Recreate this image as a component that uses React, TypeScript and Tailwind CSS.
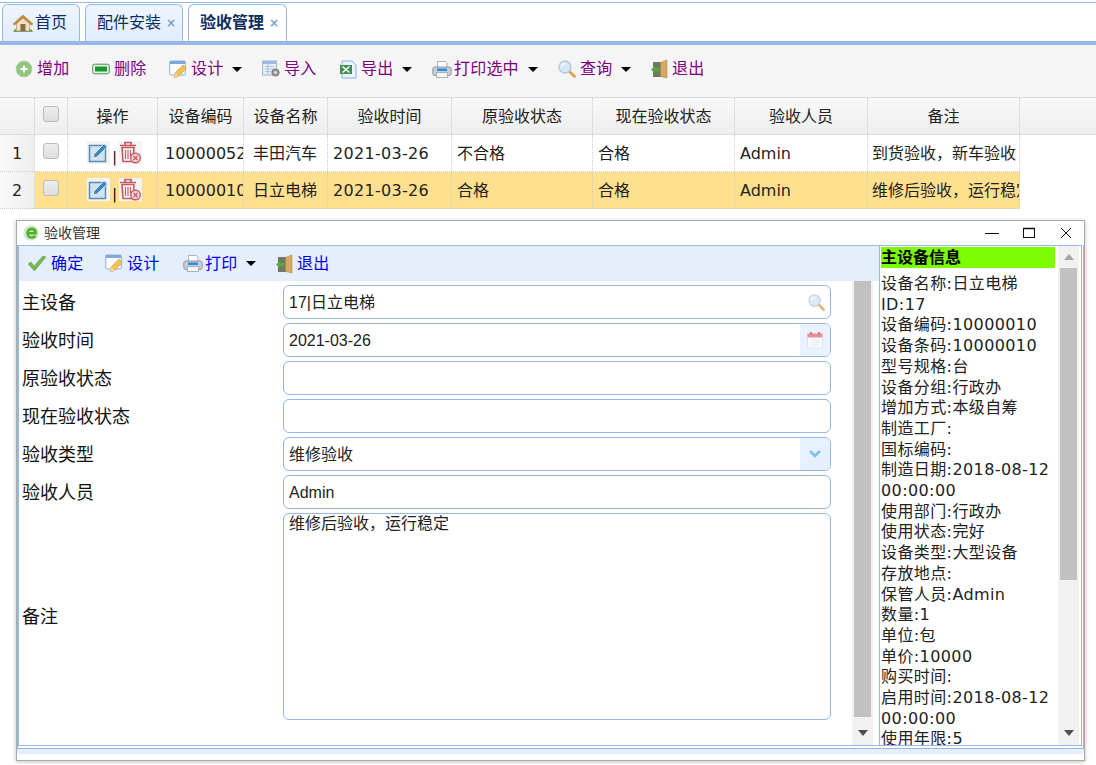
import React from 'react';

const cjk = "font-['DejaVu_Sans','Noto_Sans_CJK_SC',sans-serif]";
const arial = "font-['Liberation_Sans','Noto_Sans_CJK_SC',sans-serif]";

const HomeIcon = () => (
  <svg width="20" height="19" viewBox="0 0 20 19" className="shrink-0">
    <path d="M0 18h20l-2-3H2z" fill="#6fa34a" />
    <path d="M3.500 8v9h13V8L10 3z" fill="#efe2c4" stroke="#b69a6a" strokeWidth=".7" />
    <path d="M0 10 10 1l10 9-1.800 1L10 4l-8.200 7z" fill="#c98a3c" stroke="#a56a28" strokeWidth=".5" />
    <rect x="7.500" y="10" width="5" height="7" fill="#8a6a48" />
  </svg>
);
const PlusIcon = () => (
  <svg width="18" height="18" viewBox="0 0 18 18" className="shrink-0">
    <circle cx="9" cy="9" r="7.800" fill="#8fc77a" stroke="#a9c9a0" />
    <path d="M9 5.500v7M5.500 9h7" stroke="#fff" strokeWidth="2" />
  </svg>
);
const MinusIcon = () => (
  <svg width="18" height="12" viewBox="0 0 18 12" className="shrink-0">
    <rect x=".7" y="1.200" width="16.600" height="9.600" rx="2" fill="#e8f0e4" stroke="#4d8a56" />
    <rect x="3" y="3.500" width="12" height="5" fill="#139a2c" />
  </svg>
);
const DesignIcon = () => (
  <svg width="19" height="19" viewBox="0 0 19 19" className="shrink-0">
    <rect x=".7" y="1" width="15.600" height="14" rx="1" fill="#fdfdfd" stroke="#8fb0d8" />
    <rect x="1" y="1" width="15" height="3" fill="#7fa8dc" />
    <path d="m5 18 1-5 8-8 3.500 3.500-8 8z" fill="#f2c257" stroke="#c79436" strokeWidth=".6" />
    <path d="m5 18 1-5 3.500 3.500z" fill="#e9d9b4" />
  </svg>
);
const ImportIcon = () => (
  <svg width="19" height="18" viewBox="0 0 19 18" className="shrink-0">
    <rect x=".6" y="1" width="14" height="14" fill="#e6eefa" stroke="#9db4d6" />
    <rect x="1" y="1" width="13" height="3" fill="#9db9e0" />
    <path d="M3 6.500h9M3 9h9M3 11.500h9M6 4v10" stroke="#a9b8cc" strokeWidth=".8" />
    <circle cx="13.500" cy="12.500" r="3.600" fill="#9a9a9a" stroke="#777" />
    <circle cx="13.500" cy="12.500" r="1.300" fill="#eee" />
  </svg>
);
const ExcelIcon = () => (
  <svg width="18" height="19" viewBox="0 0 18 19" className="shrink-0">
    <path d="M3 1h10l4 4v13H3z" fill="#eaf2fb" stroke="#8fb0d8" />
    <rect x="1" y="5" width="12" height="9" fill="#3e8f52" />
    <path d="m3.500 6.500 7 6M10.500 6.500l-7 6" stroke="#fff" strokeWidth="1.600" />
  </svg>
);
const PrintIcon = () => (
  <svg width="20" height="19" viewBox="0 0 20 19" className="shrink-0">
    <path d="M5.500 8V1.500h8L15 3v5z" fill="#fff" stroke="#a9b2bd" />
    <rect x=".8" y="7" width="18.400" height="8.500" rx="2" fill="#c7ced6" stroke="#8e98a4" />
    <rect x="5" y="8.500" width="10" height="2.500" fill="#2f8be0" />
    <rect x="4.500" y="12.500" width="11" height="5" fill="#f6f6f6" stroke="#a9b2bd" />
  </svg>
);
const SearchIcon = ({ size = 18 }: { size?: number }) => (
  <svg width={size} height={size} viewBox="0 0 18 18" className="shrink-0">
    <path d="m11.500 11.500 5 5" stroke="#d9a24e" strokeWidth="2.800" strokeLinecap="round" />
    <circle cx="7" cy="7" r="6" fill="#d4e6f8" stroke="#b8c6d4" strokeWidth="1.300" />
    <path d="M3.500 6.500A3.500 3.500 0 0 1 7 3.500" stroke="#fff" strokeWidth="1.300" fill="none" />
  </svg>
);
const ExitIcon = () => (
  <svg width="19" height="20" viewBox="0 0 19 20" className="shrink-0">
    <rect x="3" y="3" width="11" height="15" fill="#6e7a62" />
    <path d="M10.500 3.500 17 1v18l-6.500-1.500z" fill="#d9a860" stroke="#ad7f3e" strokeWidth=".5" />
    <path d="M1 10.500 5 7v2h4.500v3H5v2z" fill="#54a93f" />
  </svg>
);
const CheckIcon = () => (
  <svg width="20" height="17" viewBox="0 0 20 17" className="-ml-[2px] shrink-0">
    <path d="m1 9 3-2 3 4 9-10 3 1L7.500 16z" fill="#76b852" stroke="#5d9a42" strokeWidth=".5" />
  </svg>
);
const EditIcon = () => (
  <span className="flex h-[23px] w-[23px] shrink-0 items-center justify-center bg-[#f3f3f3]">
    <svg width="21" height="21" viewBox="0 0 21 21">
      <rect x="1.500" y="3.500" width="16" height="16" fill="#d3e2ef" stroke="#5a8db3" strokeWidth="1.500" />
      <path d="m5 16 1.200-4L16 1.800l3.200 3.200L9 15z" fill="#3f86bd" stroke="#fff" strokeWidth=".7" />
    </svg>
  </span>
);
const TrashIcon = () => (
  <span className="flex h-[23px] w-[23px] shrink-0 items-center justify-center bg-[#f3f3f3]">
    <svg width="23" height="23" viewBox="0 0 23 23">
      <path d="M1 4.500h16M6 4V1.500h6V4" stroke="#c75a64" strokeWidth="1.700" fill="none" />
      <path d="M3 6.500h12l-1 14H4z" fill="none" stroke="#c75a64" strokeWidth="1.600" />
      <path d="M6.500 9v9M9 9v9M11.500 9v6" stroke="#c75a64" strokeWidth="1.100" />
      <circle cx="16.500" cy="17" r="4.800" fill="#f3d7da" stroke="#c75a64" strokeWidth="1.400" />
      <path d="m14.500 15 4 4m0-4-4 4" stroke="#c75a64" strokeWidth="1.300" />
    </svg>
  </span>
);
const IeIcon = () => (
  <svg width="16" height="16" viewBox="0 0 16 16" className="shrink-0">
    <circle cx="8" cy="8" r="7.800" fill="#d5e8d0" />
    <path d="M14 9.500H6.200c.2 2.200 3.400 2.500 4.800.6l2.500 1.300c-2.700 4-9.900 3-10.200-3C3.200 2.800 9.700.8 13 4.200c1 1.300 1.100 3.400 1 5.300zM6.200 7h4.600C10.600 5 6.600 5 6.200 7z" fill="#53b02a" />
  </svg>
);
const CalendarIcon = () => (
  <svg width="18" height="18" viewBox="0 0 18 18" className="opacity-70">
    <rect x="1.500" y="3" width="15" height="14" fill="#fff" stroke="#ddd" />
    <rect x="1.500" y="2.500" width="15" height="4" rx="1" fill="#e26a6a" />
    <rect x="4" y="1" width="2" height="3" fill="#c65050" />
    <rect x="12" y="1" width="2" height="3" fill="#c65050" />
    <path d="M5 9h8M5 11.500h8M5 14h8" stroke="#ddd" />
  </svg>
);
const Caret = () => (
  <span className="ml-[9px] h-0 w-0 border-x-[5px] border-t-[5px] border-x-transparent border-t-black" />
);

const ToolBtn = ({ icon, label, caret, color, w }: { icon: React.ReactNode; label: string; caret?: boolean; color: string; w: string }) => (
  <div className={`flex items-center ${w}`}>
    <span className="flex w-[22px] shrink-0 items-center">{icon}</span>
    <span className={`${color} text-[16px] tracking-[0.2px]`}>{label}</span>
    {caret && <Caret />}
  </div>
);

const Check = () => (
  <span className="mb-1 h-[16px] w-[16px] rounded-[3px] border border-[#bbb] bg-gradient-to-b from-[#eeeeee] to-[#dddddd]" />
);

const Scrollbar = ({ thumbH, withTop }: { thumbH: string; withTop?: boolean }) => (
  <div className="flex w-[21px] shrink-0 flex-col items-center bg-[#f1f1f1]">
    {withTop && (
      <div className="flex h-[22px] shrink-0 items-center justify-center">
        <span className="h-0 w-0 border-x-[5px] border-b-[6px] border-x-transparent border-b-[#a6a6a6]" />
      </div>
    )}
    <div className={`w-[17px] bg-[#c1c1c1] ${thumbH}`} />
    <div className="mt-auto flex h-[24px] shrink-0 items-center justify-center">
      <span className="h-0 w-0 border-x-[5px] border-t-[6px] border-x-transparent border-t-[#505050]" />
    </div>
  </div>
);

const columns = [
  { label: '操作', w: 'w-[90px]' },
  { label: '设备编码', w: 'w-[86px]' },
  { label: '设备名称', w: 'w-[84px]' },
  { label: '验收时间', w: 'w-[124px]' },
  { label: '原验收状态', w: 'w-[141px]' },
  { label: '现在验收状态', w: 'w-[142px]' },
  { label: '验收人员', w: 'w-[133px]' },
  { label: '备注', w: 'w-[152px]' },
];

const rows = [
  ['10000052', '丰田汽车', '2021-03-26', '不合格', '合格', 'Admin', '到货验收，新车验收'],
  ['10000010', '日立电梯', '2021-03-26', '合格', '合格', 'Admin', '维修后验收，运行稳定'],
];

const info = [
  '设备名称:日立电梯', 'ID:17', '设备编码:10000010', '设备条码:10000010', '型号规格:台', '设备分组:行政办',
  '增加方式:本级自筹', '制造工厂:', '国标编码:', '制造日期:2018-08-12', '00:00:00', '使用部门:行政办',
  '使用状态:完好', '设备类型:大型设备', '存放地点:', '保管人员:Admin', '数量:1', '单位:包', '单价:10000',
  '购买时间:', '启用时间:2018-08-12', '00:00:00', '使用年限:5',
];

const Field = ({ label, value, addon }: { label: string; value?: string; addon?: React.ReactNode }) => (
  <div className="flex h-[38px] items-center">
    <label className="w-[264px] pl-[3px] pt-[1px] text-[18px] text-[#111]">{label}</label>
    <div className="flex h-[34px] w-[548px] items-center overflow-hidden rounded-[6px] border border-[#95b8e7] bg-white">
      <span className={`flex-1 pl-[5px] pt-[2px] text-[16px] text-[#222] ${arial}`}>{value}</span>
      {addon}
    </div>
  </div>
);

const App: React.FC = () => {
  return (
    <div className={`relative h-[765px] w-[1096px] overflow-hidden bg-white ${cjk}`}>
      {/* tabs */}
      <div className="mt-[2px] flex h-[39px] items-end gap-[5px] border-t border-[#95b8e7] pl-[2px]">
        <div className="flex h-[37px] w-[78px] items-center rounded-t-[6px] border border-b-0 border-[#95b8e7] bg-gradient-to-b from-[#eff5ff] to-[#e0ecff] pl-[10px] text-[16px] text-[#0e2d5f]">
          <HomeIcon />
          <span className="ml-[2px]">首页</span>
        </div>
        <div className="flex h-[37px] w-[98px] items-center rounded-t-[6px] border border-b-0 border-[#95b8e7] bg-gradient-to-b from-[#eff5ff] to-[#e0ecff] pl-[11px] text-[16px] text-[#0e2d5f]">
          <span>配件安装</span>
          <span className="ml-[5px] text-[12px] font-bold text-[#7f9fc8]">×</span>
        </div>
        <div className="flex h-[37px] w-[99px] items-center rounded-t-[6px] border border-b-0 border-[#95b8e7] bg-white pl-[11px] text-[16px] font-bold text-[#0e2d5f]">
          <span>验收管理</span>
          <span className="ml-[5px] text-[12px] font-bold text-[#7f9fc8]">×</span>
        </div>
      </div>
      <div className="h-[4px] bg-[#95b8e7]" />

      {/* toolbar */}
      <div className="flex h-[52px] items-center bg-[#f5f5f5] pb-[4px] pl-[15px]">
        <ToolBtn icon={<PlusIcon />} label="增加" color="text-[#800080]" w="w-[77px]" />
        <ToolBtn icon={<MinusIcon />} label="删除" color="text-[#800080]" w="w-[77px]" />
        <ToolBtn icon={<DesignIcon />} label="设计" caret color="text-[#800080]" w="w-[93px]" />
        <ToolBtn icon={<ImportIcon />} label="导入" color="text-[#800080]" w="w-[77px]" />
        <ToolBtn icon={<ExcelIcon />} label="导出" caret color="text-[#800080]" w="w-[93px]" />
        <ToolBtn icon={<PrintIcon />} label="打印选中" caret color="text-[#800080]" w="w-[126px]" />
        <ToolBtn icon={<SearchIcon />} label="查询" caret color="text-[#800080]" w="w-[92px]" />
        <ToolBtn icon={<ExitIcon />} label="退出" color="text-[#800080]" w="w-[76px]" />
      </div>

      {/* grid */}
      <div className="flex h-[38px] border-y border-[#dddddd] bg-gradient-to-b from-[#f8f8f8] to-[#eeeeee] text-[16px] text-[#222]">
        <div className="w-[35px] border-r border-dotted border-[#ccc]" />
        <div className="flex w-[33px] items-center justify-center border-r border-dotted border-[#ccc]">
          <Check />
        </div>
        {columns.map((c) => (
          <div key={c.label} className={`flex items-center justify-center border-r border-dotted border-[#ccc] pt-[1px] ${c.w}`}>
            {c.label}
          </div>
        ))}
      </div>
      {rows.map((r, i) => (
        <div key={r[0]} className="flex h-[37px] text-[16px] text-[#222]">
          <div className="flex w-[35px] items-center justify-center border-r border-b border-dotted border-[#ccc] bg-gradient-to-r from-[#fafafa] to-[#eeeeee] pt-[2px]">
            {i + 1}
          </div>
          <div className={`flex border-b border-dotted border-[#ccc] ${i === 1 ? 'bg-[#ffe08f]' : 'bg-white'}`}>
            <div className="flex w-[33px] items-center justify-center border-r border-dotted border-[#ccc]">
              <Check />
            </div>
            <div className="flex w-[90px] items-center justify-center gap-[2px] border-r border-dotted border-[#ccc] pb-[2px] pl-[4px]">
              <EditIcon />
              <span className="mt-[10px] text-[14px] leading-none text-black">|</span>
              <TrashIcon />
            </div>
            <div className="w-[86px] overflow-hidden whitespace-nowrap border-r border-dotted border-[#ccc] pl-[7px] pt-[1px] leading-[36px]">{r[0]}</div>
            <div className="w-[84px] overflow-hidden whitespace-nowrap border-r border-dotted border-[#ccc] pl-[9px] pt-[1px] leading-[36px]">{r[1]}</div>
            <div className="w-[124px] overflow-hidden whitespace-nowrap border-r border-dotted border-[#ccc] pl-[5px] pt-[1px] leading-[36px] tracking-[0.3px]">{r[2]}</div>
            <div className="w-[141px] overflow-hidden whitespace-nowrap border-r border-dotted border-[#ccc] pl-[5px] pt-[1px] leading-[36px]">{r[3]}</div>
            <div className="w-[142px] overflow-hidden whitespace-nowrap border-r border-dotted border-[#ccc] pl-[5px] pt-[1px] leading-[36px]">{r[4]}</div>
            <div className="w-[133px] overflow-hidden whitespace-nowrap border-r border-dotted border-[#ccc] pl-[5px] pt-[1px] leading-[36px]">{r[5]}</div>
            <div className="w-[152px] overflow-hidden whitespace-nowrap border-r border-dotted border-[#ccc] pl-[4px] pt-[1px] leading-[36px]">{r[6]}</div>
          </div>
        </div>
      ))}

      {/* dialog window */}
      <div className="absolute left-[16px] top-[220px] flex h-[541px] w-[1069px] flex-col border border-[#aaaaaa] bg-white shadow-[0_1px_4px_rgba(0,0,0,0.25)]">
        <div className="flex h-[24px] shrink-0 items-center pl-[6px]">
          <IeIcon />
          <span className="ml-[5px] text-[14px] text-[#333]">验收管理</span>
          <div className="ml-auto flex items-center">
            <svg width="14" height="14" viewBox="0 0 14 14" className="mr-[23px]"><path d="M0 7.500h14" stroke="#111" /></svg>
            <svg width="14" height="14" viewBox="0 0 14 14" className="mr-[23px]"><rect x="1.500" y="2.500" width="11" height="9" fill="none" stroke="#111" /><path d="M1 2.500h12" stroke="#111" strokeWidth="1.500" /></svg>
            <svg width="14" height="14" viewBox="0 0 14 14" className="mr-[11px]"><path d="m2 2 10 10M12 2 2 12" stroke="#111" /></svg>
          </div>
        </div>
        <div className="h-[504px] shrink-0 border-x border-b border-[#95b8e7] pb-[2px] pr-px">
          <div className="flex h-[501px] border border-[#95b8e7]">
            {/* left: form */}
            <div className="flex w-[860px] shrink-0 flex-col">
              <div className="flex h-[35px] shrink-0 items-center bg-[#e6eefc] pl-[10px]">
                <ToolBtn icon={<CheckIcon />} label="确定" color="text-[#0000ee]" w="w-[76px]" />
                <ToolBtn icon={<DesignIcon />} label="设计" color="text-[#0000ee]" w="w-[78px]" />
                <ToolBtn icon={<PrintIcon />} label="打印" caret color="text-[#0000ee]" w="w-[92px]" />
                <ToolBtn icon={<ExitIcon />} label="退出" color="text-[#0000ee]" w="w-[70px]" />
              </div>
              <div className="flex min-h-0 flex-1">
                <div className="w-[833px] shrink-0 pt-[2px]">
                  <Field label="主设备" value="17|日立电梯" addon={<span className="mr-[5px] opacity-80"><SearchIcon size={17} /></span>} />
                  <Field label="验收时间" value="2021-03-26" addon={<span className="flex h-full w-[30px] items-center justify-center bg-[#eaf2ff]"><CalendarIcon /></span>} />
                  <Field label="原验收状态" />
                  <Field label="现在验收状态" />
                  <Field label="验收类型" value="维修验收" addon={
                    <span className="flex h-full w-[30px] items-center justify-center bg-[#e6f0ff]">
                      <svg width="14" height="10" viewBox="0 0 14 10"><path d="m2 2 5 5 5-5" fill="none" stroke="#7cc0ee" strokeWidth="2.500" /></svg>
                    </span>
                  } />
                  <Field label="验收人员" value="Admin" />
                  <div className="flex h-[211px] items-center">
                    <label className="w-[264px] pl-[3px] text-[18px] text-[#111]">备注</label>
                    <div className={`h-[207px] w-[548px] rounded-[6px] border border-[#95b8e7] bg-white pl-[5px] pt-[1px] text-[16px] leading-[18px] text-[#222] ${arial}`}>
                      维修后验收，运行稳定
                    </div>
                  </div>
                </div>
                <Scrollbar thumbH="h-[436px]" />
              </div>
            </div>
            {/* right: info */}
            <div className="flex min-w-0 flex-1 border-l border-[#95b8e7] bg-white">
              <div className="w-[178px] shrink-0 overflow-hidden pl-[1px] pt-[1px] text-[16px] leading-[21px] text-[#222]">
                <div className="h-[21px] w-[174px] bg-[#7cfc00] font-bold text-black">主设备信息</div>
                <div className="mt-[6px] leading-[20.7px] tracking-[0.4px]">
                  {info.map((t, i) => (
                    <div key={i} className="whitespace-nowrap">{t}</div>
                  ))}
                </div>
              </div>
              <Scrollbar thumbH="h-[312px]" withTop />
            </div>
          </div>
        </div>
        <div className="h-[5px] shrink-0 bg-[#e6eef8]" />
      </div>
    </div>
  );
};

export default App;
